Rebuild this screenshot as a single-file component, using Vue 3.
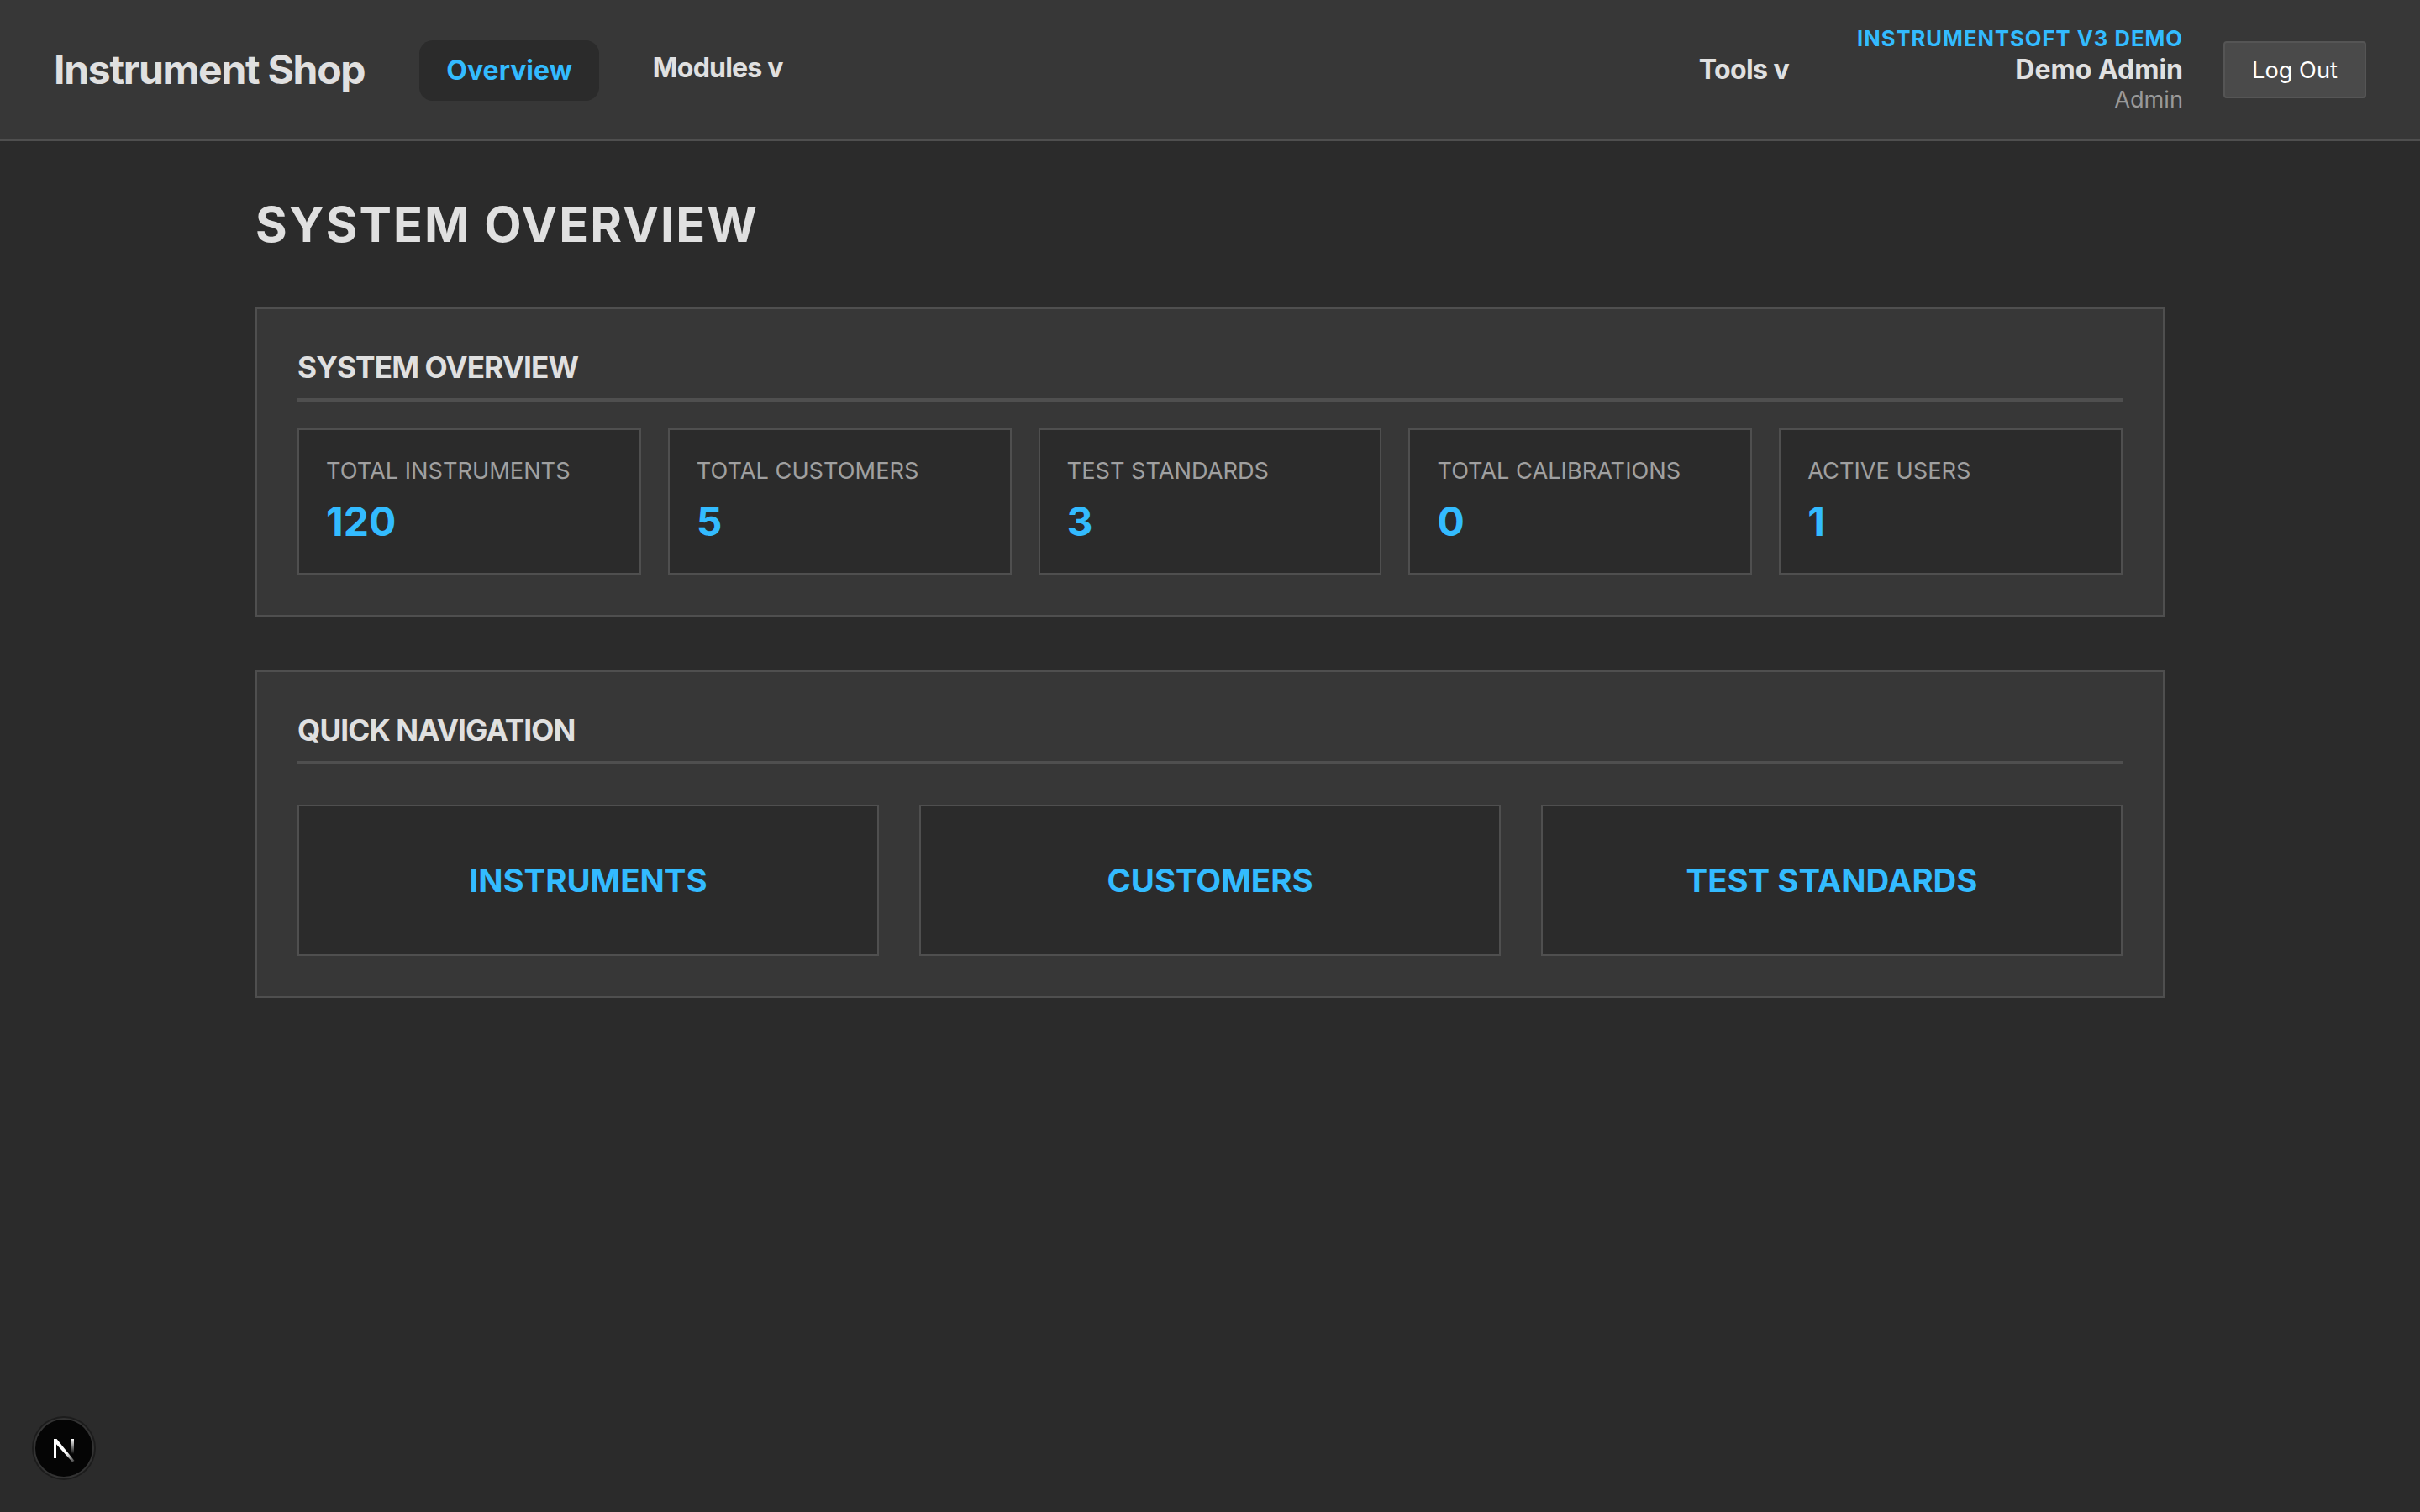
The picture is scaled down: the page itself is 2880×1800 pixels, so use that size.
<script setup>
const stats = [
  { label: 'TOTAL INSTRUMENTS', value: '120' },
  { label: 'TOTAL CUSTOMERS', value: '5' },
  { label: 'TEST STANDARDS', value: '3' },
  { label: 'TOTAL CALIBRATIONS', value: '0' },
  { label: 'ACTIVE USERS', value: '1' }
]
const links = ['INSTRUMENTS', 'CUSTOMERS', 'TEST STANDARDS']
</script>

<template>
  <div class="page">
    <header class="header">
      <div class="brand">Instrument Shop</div>
      <nav class="nav">
        <a class="nav-link active">Overview</a>
        <a class="nav-link modules">Modules v</a>
      </nav>
      <div class="spacer"></div>
      <a class="nav-link tools">Tools v</a>
      <div class="user">
        <div class="tenant">INSTRUMENTSOFT V3 DEMO</div>
        <div class="name">Demo Admin</div>
        <div class="role">Admin</div>
      </div>
      <button class="logout">Log Out</button>
    </header>

    <main class="main">
      <h1 class="title">SYSTEM OVERVIEW</h1>

      <section class="card">
        <h2 class="card-title">SYSTEM OVERVIEW</h2>
        <div class="stats">
          <div v-for="s in stats" :key="s.label" class="stat">
            <div class="stat-label">{{ s.label }}</div>
            <div class="stat-value">{{ s.value }}</div>
          </div>
        </div>
      </section>

      <section class="card">
        <h2 class="card-title">QUICK NAVIGATION</h2>
        <div class="links">
          <a v-for="l in links" :key="l" class="link">{{ l }}</a>
        </div>
      </section>
    </main>

    <div class="next-badge">
      <svg class="next-logo" width="30" height="30" viewBox="0 0 30 30" fill="none">
        <defs>
          <linearGradient id="nDiag" x1="12" y1="10" x2="28" y2="28" gradientUnits="userSpaceOnUse">
            <stop offset="0.45" stop-color="#fff" />
            <stop offset="1" stop-color="#fff" stop-opacity="0.25" />
          </linearGradient>
          <linearGradient id="nBar" x1="0" y1="2" x2="0" y2="20" gradientUnits="userSpaceOnUse">
            <stop offset="0" stop-color="#fff" />
            <stop offset="1" stop-color="#fff" stop-opacity="0" />
          </linearGradient>
        </defs>
        <path d="M3 2h3v23H3z" fill="#fff" />
        <path d="M3 2h3.5l21 26-2.4 1.6L3 5z" fill="url(#nDiag)" />
        <path d="M24 2h3v20h-3z" fill="url(#nBar)" />
      </svg>
    </div>
  </div>
</template>

<style>
html, body { margin: 0; background: #2b2b2b; }
</style>

<style scoped>
.page {
  min-height: 1800px;
  background: #2b2b2b;
  color: #e0e0e0;
  font-family: Inter, "Liberation Sans", sans-serif;
  box-sizing: border-box;
}
.header {
  height: 168px;
  box-sizing: border-box;
  display: flex;
  align-items: center;
  padding: 0 64px;
  background: #373737;
  border-bottom: 2px solid #4f4f4f;
}
.brand {
  font-size: 48px;
  font-weight: 700;
  letter-spacing: -1.28px;
  color: #e0e0e0;
  margin-right: 65px;
  margin-top: -2px;
}
.nav {
  display: flex;
  align-items: center;
  gap: 32px;
}
.nav-link {
  font-size: 32px;
  font-weight: 600;
  line-height: 40px;
  padding: 16px 32px;
  border-radius: 16px;
  color: #e0e0e0;
}
.active {
  font-weight: 700;
  color: #33bbff;
  background: #2b2b2b;
  margin-top: 2px;
}
.modules {
  margin-top: -4px;
  font-weight: 700;
  letter-spacing: -0.8px;
}
.tools {
  margin-right: 49px;
  font-weight: 700;
  letter-spacing: -0.6px;
}
.spacer {
  flex: 1;
}
.user {
  text-align: right;
  margin-right: 48px;
}
.tenant {
  font-size: 25.6px;
  font-weight: 700;
  letter-spacing: 1px;
  color: #33bbff;
  margin-top: -2px;
  margin-bottom: 2px;
}
.name {
  font-size: 32px;
  font-weight: 700;
  color: #e0e0e0;
}
.role {
  font-size: 27.2px;
  color: #999999;
}
.logout {
  width: 170px;
  height: 68px;
  box-sizing: border-box;
  background: #4a4a4a;
  border: 2px solid #555555;
  border-radius: 4px;
  color: #ffffff;
  font-family: inherit;
  font-size: 27.2px;
}
.main {
  width: 2272px;
  margin: 0 auto;
  padding-top: 64px;
}
.title {
  margin: 0 0 64px;
  font-size: 57.6px;
  line-height: 70px;
  font-weight: 700;
  letter-spacing: 2px;
  color: #e0e0e0;
}
.card {
  background: #373737;
  border: 2px solid #4f4f4f;
  padding: 48px;
  margin-bottom: 64px;
}
.card-title {
  margin: 0 0 32px;
  font-size: 35.2px;
  line-height: 42px;
  font-weight: 700;
  letter-spacing: -0.9px;
  padding-bottom: 16px;
  border-bottom: 4px solid #4f4f4f;
  color: #e0e0e0;
}
.stats {
  display: grid;
  grid-template-columns: repeat(5, 1fr);
  gap: 32px;
}
.stat {
  background: #2b2b2b;
  border: 2px solid #4f4f4f;
  padding: 32px;
}
.stat-label {
  font-size: 27.2px;
  color: #a0a0a0;
}
.stat-value {
  margin-top: 14.4px;
  font-size: 48px;
  font-weight: 700;
  color: #33bbff;
}
.links {
  display: grid;
  grid-template-columns: repeat(3, 1fr);
  gap: 48px;
  margin-top: 48px;
}
.link {
  height: 179.5px;
  display: flex;
  align-items: center;
  justify-content: center;
  background: #2b2b2b;
  border: 2px solid #4f4f4f;
  font-size: 38.4px;
  font-weight: 700;
  color: #33bbff;
  box-sizing: border-box;
}
.next-badge {
  position: fixed;
  left: 40px;
  bottom: 40px;
  width: 72px;
  height: 72px;
  box-sizing: border-box;
  border-radius: 50%;
  background: #050505;
  border: 2px solid #333333;
  box-shadow: 0 0 0 2px #1c1c1c;
  display: flex;
  align-items: center;
  justify-content: center;
}
.next-logo {
  margin-top: 3px;
}
</style>
